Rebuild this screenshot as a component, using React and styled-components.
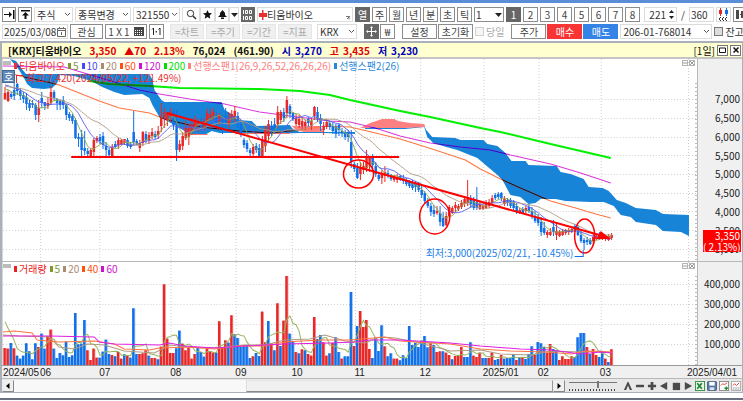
import React from "react";
import styled, { createGlobalStyle, css } from "styled-components";

const Global = createGlobalStyle`
  *, *::before, *::after { box-sizing: border-box; }
  body {
    margin: 0;
    background: #fff;
    color: #333;
    font: 10px/13px "Noto Sans CJK KR", "Liberation Sans", sans-serif;
  }
  button, input, select { font: inherit; color: inherit; margin: 0; }
`;

/* ---------- data ---------- */

const STEP = 3.055;
const X0 = 6;
const xAt = (i) => X0 + i * STEP;

// Each candle: direction, high, body top, body bottom, low (plot units)
const candles = `
r 87 93 99 100|r 90 92 101 102|b 92 94 97 99|b 83 90 96 100|b 83 84 91 95|b 88 91 96 100|b 92 95 99 103|b 93 97 104 110|b 100 103 108 111|b 100 103 105 108|
b 103 105 115 120|r 100 108 115 122|b 92 98 103 108|b 102 102 106 110|r 97 103 106 109|r 86 92 103 105|b 90 92 98 101|b 98 99 103 110|b 100 101 105 110|b 96 100 105 109|
b 104 105 115 120|b 112 114 118 121|b 114 116 121 124|b 118 120 138 139|b 133 137 139 147|b 130 137 150 156|b 131 148 151 155|b 148 151 154 158|r 148 150 156 158|r 138 140 152 156|
r 136 138 141 143|b 134 137 141 144|b 132 136 145 149|b 142 146 150 156|b 148 150 155 157|r 144 147 156 157|b 141 144 147 148|r 138 140 145 149|r 139 140 144 145|r 139 139 143 145|
b 138 140 146 148|b 142 144 147 149|b 111 132 142 145|b 139 141 143 145|r 140 143 148 152|r 131 132 143 146|b 131 134 140 143|r 132 135 140 144|r 128 132 136 139|b 131 134 137 139|
r 126 131 135 139|r 103 118 126 132|r 108 112 118 128|r 112 114 120 126|r 108 112 116 122|b 110 112 125 130|b 110 126 150 161|r 140 144 150 152|r 132 136 146 150|r 121 128 138 140|
r 124 128 137 145|r 118 124 131 135|r 116 120 126 129|r 118 122 126 132|b 118 121 127 128|r 118 121 127 131|r 109 113 121 125|r 109 114 118 121|r 108 112 116 120|b 112 118 122 128|
r 113 115 121 125|b 115 120 124 134|b 108 116 122 128|r 112 118 124 128|r 110 114 119 122|r 106 111 117 122|b 112 116 124 128|b 120 124 133 137|b 138 140 145 148|b 140 143 149 152|
b 148 150 153 156|r 144 147 154 157|b 143 146 150 153|b 144 148 156 157|r 136 140 156 157|r 126 130 146 152|r 120 124 136 141|b 121 126 132 136|b 118 124 130 134|r 106 112 124 128|
r 110 112 120 124|b 108 112 118 122|r 96 100 113 118|b 104 106 114 118|b 112 113 119 121|r 114 118 124 126|r 115 119 125 128|r 118 121 126 130|r 120 122 126 130|b 117 119 123 127|
r 118 121 126 130|r 106 107 116 120|b 107 112 118 122|b 114 118 124 131|r 122 126 130 135|r 119 122 127 129|b 121 123 127 130|b 122 126 131 134|b 124 127 134 138|b 123 125 130 136|
b 128 131 133 137|b 130 132 137 140|b 130 133 137 142|b 130 142 162 168|b 162 164 169 172|b 163 168 178 179|r 162 168 174 180|r 162 166 170 174|r 150 156 168 172|r 156 158 164 172|
b 154 157 165 172|b 162 166 174 177|b 173 175 179 181|r 170 174 178 184|r 166 172 176 182|b 170 173 176 178|b 174 175 179 181|r 175 176 180 182|r 174 177 180 183|b 175 176 180 181|
b 175 178 181 184|b 178 180 184 186|b 180 182 186 188|b 180 183 188 190|b 181 183 187 192|b 182 184 190 192|b 186 190 195 198|b 191 193 201 203|b 198 202 206 208|b 203 206 212 216|
b 205 210 214 217|r 206 211 213 215|b 206 213 222 226|b 212 218 226 227|r 212 216 225 226|r 205 207 216 218|r 206 208 213 214|r 202 205 208 212|r 204 206 209 211|r 200 203 207 209|
r 196 199 204 207|r 180 197 203 206|b 195 198 204 208|b 197 200 208 210|b 187 202 208 210|r 202 204 209 210|r 204 206 209 210|r 200 203 208 209|r 199 202 206 208|r 195 198 203 205|
b 193 195 198 200|b 192 194 197 199|b 192 193 198 201|r 196 199 204 206|b 198 200 203 206|b 198 200 206 208|b 200 202 208 210|b 203 206 212 214|r 208 210 212 214|b 207 209 213 214|
r 206 208 211 214|b 204 207 211 213|b 207 211 215 219|b 211 216 221 223|b 214 217 223 226|b 217 222 232 236|b 222 228 233 235|r 230 232 235 238|r 228 232 235 236|b 220 227 232 236|
r 223 231 235 240|r 230 232 236 237|r 229 231 235 236|r 229 230 233 235|r 228 230 232 235|r 227 229 232 233|b 224 226 230 232|b 225 227 235 236|b 229 235 241 243|b 238 240 243 250|
b 237 240 242 245|b 238 240 244 245|r 233 237 241 245|r 234 236 239 240|b 232 234 238 240|r 233 235 237 240|r 235 236 239 241|r 234 236 240 241|r 233 235 238 240`
  .split("|")
  .map((row) => {
    const [dir, ...v] = row.trim().split(" ");
    const [high, top, bottom, low] = v.map(Number);
    return { up: dir === "r", high, top, bottom, low, close: dir === "r" ? top : bottom };
  });

// Volume per session, in thirds of a plot unit above the base line
const volumes = `
51r 49r 66b 50r 28b 19b 28b 65b 41b 17b 65b 54r 94b 49b 87r 106r 49b 21b 36b 29b 70b 24b 29b 156b 62b 64b 135b
44r 15r 49r 22r 22b 40b 76b 33b 30r 26b 39r 19r 32b 28r 22b 170b 33b 33r 35r 44r 28b 21r 21r 17b 55r 242r 79r
36r 36r 50b 103b 64r 44r 52r 19r 33r 53b 39b 25b 50r 39r 37r 37b 131r 52r 74r 67b 149r 92b 81b 54b 60b
60b 21b 26r 36b 27b 160r 68r 132b 65r 44b 185r 57b 133r 267r 94b 71b 39r 35b 47r 44b 33r 28r 144r 78b 90b 68r 28r 35b
66r 83b 39b 19r 26b 26b 219b 57r 117b 162r 114r 135r 48r 21b 82b 42b 119b 56r 26b 35b 19r 19r 14b 29b 21b 117b 60b 66b 54b
70b 87b 53b 65r 60b 39r 41r 41b 37r 30r 17b 27r 30r 54r 24b 24b 68b 28r 24r 37r 21b 21b 21r 37r
15b 18b 30r 19b 21b 21b 33b 15r 24b 24r 18b 33b 56b 30r 69b 65b 54b 36r 63r 48b 44b 15r 26r 18r 18r 26r 24b 83b 96b 96b
54r 33b 48r 30r 24b 41b 19r 9b 47r`
  .trim()
  .split(/\s+/)
  .map((t) => ({ up: t.endsWith("r"), h: parseInt(t, 10) / 3 }));

const average = (values, period, seed) =>
  values.map((_, i) => {
    let sum = 0;
    for (let k = 0; k < period; k += 1) sum += i - k >= 0 ? values[i - k] : seed;
    return sum / period;
  });

const toPoints = (ys) => ys.map((y, i) => `${xAt(i).toFixed(1)},${y.toFixed(1)}`).join(" ");

const closes = candles.map((c) => c.close);
const priceAverages = [
  ["#8aa84a", toPoints(average(closes, 5, 88))],
  ["#5a5af0", toPoints(average(closes, 10, 84))],
  ["#b09a80", toPoints(average(closes, 20, 86))],
];
const volumeHeights = volumes.map((v) => v.h);
const volumeFive = toPoints(average(volumeHeights, 5, 50).map((h) => 365 - h));

const MA60 = "14,74 25,77 48,82 60,85 80,93 100,101 120,108 150,113 165,119 190,125 210,128 240,131 270,133 300,130 325,126 350,127 363,130 400,139 432,149 465,160 480,169 500,179 520,188 543,198 550,201 575,208 595,214 610,218";
const MA120 = "4,66 65,67 85,73 115,82 140,90 160,94 190,99 225,104 260,112 290,116 330,121 350,122 375,128 400,136 430,143 460,147 490,150 510,155 550,164 580,173 610,183";
const MA200 = "90,81 110,84 150,86 180,88 260,89 300,91 330,95 350,100 400,111 430,117 480,128 500,132 550,144 610,158";

const CLOUD = [
  "M11,59 L17,61 22,68 27,74 150,74 153,80 155,90 162,100 165,102 222,102 225,110 232,114 238,120 252,121 257,126 290,125 293,129 300,132 350,132 355,132 355,134 325,133 300,133 270,134 240,133 232,133 220,133 212,131 205,135 190,134 175,125 160,117 153,105 150,98 143,94 125,95 115,92 103,87 92,81 75,76 61,75 58,83 53,88 45,89 33,88 28,84 25,78 20,70 Z",
  "M365,127 L405,128 424,126 426,130 432,137 455,138 460,140 483,140 487,144 497,146 505,153 511,161 525,161 528,165 556,166 560,172 570,174 583,179 588,187 602,188 608,191 616,200 625,203 635,208 655,210 662,214 688,215 688,236 680,232 662,231 655,225 635,222 630,217 620,215 613,206 603,202 590,202 565,201 555,199 540,199 535,203 528,204 520,197 510,195 502,180 497,175 477,158 457,150 446,147 433,143 427,137 424,127 405,129 365,129 Z",
].join(" ");

const VERTICALS = [41, 100, 171, 236, 292, 355, 420, 483, 538, 600, 687];
const PRICE_LINES = [99, 118, 137, 155, 174, 193, 211, 230, 249];
const VOLUME_LINES = [284, 304, 324, 344];

/* ---------- frame ---------- */

const Window = styled.main`
  border-top: 3px solid #5b8ed6;
  border-bottom: 2px solid #6a7080;
  overflow: hidden;
`;

const Toolbar = styled.header`
  display: flex;
  flex-direction: column;
  gap: 2px;
  padding: 4px 0 2px 2px;
`;

const ToolRow = styled.div`
  display: flex;
  gap: 2px;
  height: 15px;
  white-space: nowrap;
`;

const ToolGroup = styled.div`
  display: flex;
  flex: none;
  align-items: center;
  gap: ${(p) => p.$gap ?? 2}px;
  margin-left: ${(p) => p.$before ?? 0}px;
`;

const tones = {
  plain: css`background: #fff; border-color: #8c8c8c; color: #444;`,
  soft: css`background: #fff; border-color: #dcdcdc; color: #333;`,
  dark: css`background: #666; border-color: #666; color: #fff;`,
  off: css`background: #f0f0f0; border-color: #e6e6e6; color: #aaa;`,
  buy: css`background: #f83434; border-color: #f83434; color: #fff;`,
  sell: css`background: #3484e8; border-color: #3484e8; color: #fff;`,
};

const ToolButton = styled.button`
  display: flex;
  flex: none;
  align-items: center;
  justify-content: center;
  width: ${(p) => p.$w ?? 15}px;
  height: 15px;
  padding: 0;
  border: 1px solid;
  line-height: 13px;
  ${(p) => tones[p.$tone ?? "plain"]}
`;

const Field = styled.span`
  display: flex;
  flex: none;
  align-items: center;
  width: ${(p) => p.$w}px;
  height: 15px;
  padding: 0 1px;
  border: 1px solid ${(p) => (p.$strong ? "#8c8c8c" : "#dcdcdc")};
  background: #fff;
  overflow: hidden;
`;

const TextInput = styled.input`
  flex: 1;
  min-width: 0;
  width: 100%;
  height: 13px;
  padding: 0;
  border: 0;
  outline: 0;
  background: none;
  text-align: ${(p) => p.$align ?? "left"};
`;

const Picker = styled.select`
  flex: 1;
  min-width: 0;
  height: 13px;
  padding: 0 0 0 1px;
  border: 0;
  outline: 0;
  appearance: none;
  background: none;
  line-height: 13px;
`;

const Check = styled.label`
  display: flex;
  flex: none;
  align-items: center;
  gap: 2px;
  color: ${(p) => (p.$off ? "#aaa" : "#333")};
`;

const Tick = styled.input`
  appearance: none;
  width: 9px;
  height: 9px;
  border: 1px solid ${(p) => (p.disabled ? "#d0d0d0" : "#777")};
  background: ${(p) => (p.disabled ? "#f6f6f6" : "#ddd")};
`;

const FixedSvg = styled.svg`flex: none;`;

const Chevron = () => (
  <FixedSvg width="7" height="5" viewBox="0 0 7 5" fill="none" stroke="#555">
    <path d="M1 1l2.500 2.500L6 1" />
  </FixedSvg>
);

const Down = () => (
  <FixedSvg width="7" height="4" viewBox="0 0 7 4" fill="#222"><path d="M0 0h7L3.500 4z" /></FixedSvg>
);

function Dropdown({ label, value, width }) {
  return (
    <Field $w={width}>
      <Picker aria-label={label} defaultValue={value}><option>{value}</option></Picker>
      <Chevron />
    </Field>
  );
}

/* ---------- quote strip ---------- */

const Panel = styled.section`
  border: solid #a9b0ba;
  border-width: 2px 1px 1px 2px;
  margin-bottom: 5px;
`;

const Quote = styled.div`
  display: flex;
  align-items: center;
  gap: 8px;
  height: 16px;
  padding: 0 1px 0 6px;
  border-bottom: 2px solid #c4c4c4;
  background: #ffffd0;
  color: #111;
  font-weight: 700;
  white-space: nowrap;
`;

const Figure = styled.span`color: ${(p) => p.$color ?? "#111"};`;
const Pair = styled.span`
  display: flex;
  gap: 4px;
  color: ${(p) => p.$color};
`;
const Period = styled.span`
  margin-left: auto;
  font-weight: 400;
`;
const FrameButtons = styled.span`
  display: flex;
  gap: 2px;
  margin-left: -6px;
`;
const FrameButton = styled.button`
  display: flex;
  align-items: center;
  justify-content: center;
  width: 11px;
  height: 11px;
  padding: 0;
  border: 1px solid #777;
  background: #fff;
`;

/* ---------- charts ---------- */

const Pane = styled.div`
  display: grid;
  grid-template-columns: minmax(0, 1fr) 45px;
  border-bottom: 1px solid ${(p) => p.$line ?? "#b8b8b8"};
`;

const Plot = styled.div`
  position: relative;
  border-left: 1px solid #d8d8d8;
`;

const Canvas = styled.svg`
  display: block;
  width: 100%;
  height: ${(p) => p.$h}px;
`;

const Legend = styled.div`
  position: absolute;
  top: 0;
  left: ${(p) => p.$left}px;
  display: flex;
  gap: 3px;
  white-space: nowrap;
`;

const Key = styled.span`
  display: flex;
  align-items: center;
  gap: 2px;
  color: ${(p) => p.$color};
  &::before {
    content: "";
    width: 3px;
    height: 6px;
    background: currentColor;
  }
`;

const Handle = styled.span`
  position: absolute;
  top: 2px;
  left: 0;
  width: 8px;
  height: 4px;
  background: #bcbcbc;
`;

const Callout = styled.span`
  position: absolute;
  top: ${(p) => p.$top}px;
  ${(p) => (p.$right ? `right: ${p.$right}` : `left: ${p.$left}px`)};
  color: ${(p) => p.$color};
  white-space: nowrap;
`;

const Badge = styled.button`
  position: absolute;
  top: 11px;
  left: -1px;
  width: 13px;
  height: 13px;
  padding: 0;
  border: 1px solid #46688f;
  background: #6088b8;
  color: #fff;
  line-height: 11px;
`;

const PaneTools = styled.div`
  position: absolute;
  top: 1px;
  right: 2px;
  display: flex;
  gap: 1px;
`;

const PaneTool = styled.button`
  display: flex;
  align-items: center;
  justify-content: center;
  width: 6px;
  height: 6px;
  padding: 0;
  border: 1px solid #b4b4b4;
  background: #fff;
`;

const Axis = styled.div`
  position: relative;
  padding: ${(p) => p.$top}px 2px 0 0;
  border-left: 1px solid #b8b8b8;
  background: #f0f0f0;
  text-align: right;
  color: #222;
`;

const AxisValue = styled.div`
  line-height: ${(p) => p.$h}px;
  margin-bottom: ${(p) => p.$after ?? 0}px;
`;

const LastPrice = styled.div`
  position: absolute;
  top: 171px;
  right: 1px;
  width: 38px;
  padding-right: 1px;
  background: #f00;
  color: #fff;
  line-height: 11px;
  white-space: nowrap;
`;

const Dates = styled.div`
  display: grid;
  grid-template-columns: 37fr 59fr 71fr 65fr 56fr 63fr 65fr 63fr 55fr 62fr 87fr 55px;
  height: 13px;
  padding-left: 1px;
  border-bottom: 1px solid #b8b8b8;
  background: #f0f0f0;
  color: #222;
  font-family: "Liberation Sans Narrow", "Liberation Sans", sans-serif;
  white-space: nowrap;
`;

const DateMark = styled.span`
  min-width: 0;
  line-height: 13px;
`;

/* ---------- bottom strip ---------- */

const Footer = styled.div`
  display: flex;
  align-items: center;
  height: 13px;
  background: #e8e8e8;
`;

const ScrollButton = styled.button`
  display: flex;
  align-items: center;
  justify-content: center;
  flex: none;
  width: 12px;
  height: 12px;
  padding: 0;
  border: 1px solid;
  border-color: #eee #888 #888 #eee;
  background: #f0f0f0;
`;

const Track = styled.div`
  display: flex;
  justify-content: flex-end;
  flex: 1;
  height: 12px;
  background: #f8f8f8;
`;

const Thumb = styled.div`
  width: 57%;
  border: 1px solid;
  border-color: #e4e4e4 #999 #888 #ddd;
  background: #f0f0f0;
`;

const Zoom = styled.input`
  appearance: none;
  flex: none;
  width: 48px;
  height: 12px;
  margin: 0 5px 0 4px;
  background:
    repeating-linear-gradient(90deg, #444 0 1px, transparent 1px 3px) 0 9px / 100% 2px no-repeat,
    linear-gradient(#777, #777) 0 2px / 100% 1px no-repeat;
  &::-webkit-slider-thumb {
    appearance: none;
    width: 2px;
    height: 7px;
    margin-top: -3px;
    background: #777;
  }
`;

const IconButton = styled.button`
  display: flex;
  align-items: center;
  justify-content: center;
  flex: none;
  width: 12px;
  height: 12px;
  padding: 0;
  border: 0;
  background: none;
`;

/* ---------- pieces ---------- */

function Grid({ rows, top, bottom }) {
  return (
    <g stroke="#d0d0d0" strokeDasharray="1 2">
      {VERTICALS.map((x) => <path key={x} d={`M${x}.5 ${top}V${bottom}`} />)}
      {rows.map((y) => <path key={y} d={`M4 ${y}.5H696`} />)}
    </g>
  );
}

function Ticks({ from, to }) {
  const marks = [];
  for (let y = from; y < to; y += 4) marks.push(<path key={y} d={`M694 ${y}.5h2`} />);
  return <g stroke="#bbb">{marks}</g>;
}

function LongAverages({ dark }) {
  return (
    <g fill="none">
      <polyline points={MA60} stroke={dark ? "#0a1030" : "#ff7440"} />
      <polyline points={MA120} stroke={dark ? "#1818d0" : "#d838d8"} />
      <polyline points={MA200} stroke={dark ? "#087820" : "#00f000"} strokeWidth="2" />
    </g>
  );
}

function PriceChart() {
  return (
    <Canvas $h={202} viewBox="4 59 692 202" preserveAspectRatio="none" role="img" aria-label="티움바이오 일봉 차트">
      <clipPath id="cloud"><path d={CLOUD} /></clipPath>
      <Grid rows={PRICE_LINES} top={59} bottom={261} />
      <Ticks from={83} to={260} />
      <path d={CLOUD} fill="#1884d8" />
      <path d="M292 126H320L324 132H304L296 130ZM360 128L364 126 370 123 376 121 382 119 394 119 398 121 410 123 424 124 425 127 405 128 365 128Z" fill="#ff8080" />
      <path d="M188 134.500H208M236 133.500H290" stroke="#ff7070" />
      <LongAverages />
      <g clipPath="url(#cloud)"><LongAverages dark /></g>
      {candles.map((c, i) => (
        <g key={i} fill={c.up ? "#e82828" : "#1070e8"}>
          <rect x={xAt(i) - 0.500} y={c.high} width="1" height={c.low - c.high} />
          <rect x={xAt(i) - 1.250} y={c.top} width="2.500" height={c.bottom - c.top} />
        </g>
      ))}
      {priceAverages.map(([color, points]) => (
        <polyline key={color} points={points} fill="none" stroke={color} strokeWidth="0.900" />
      ))}
      <g fill="none" stroke="#f00" strokeWidth="2">
        <path d="M72 157H399" />
        <path d="M167 113L602 236" />
        <ellipse cx="358.500" cy="174" rx="15" ry="14" strokeWidth="1.500" />
        <ellipse cx="434.500" cy="216.500" rx="15" ry="17.500" strokeWidth="1.500" />
        <ellipse cx="584" cy="236" rx="10" ry="17" strokeWidth="1.500" />
      </g>
      <path d="M600 231L610 239 596 239Z" fill="#f00" />
      <path d="M574 256.500H582.500V250" fill="none" stroke="#1070e8" />
      <path d="M17.500 83V75.500H24" fill="none" stroke="#e82828" />
    </Canvas>
  );
}

function VolumeChart() {
  return (
    <Canvas $h={103} viewBox="4 262 692 103" preserveAspectRatio="none" role="img" aria-label="거래량 차트">
      <Grid rows={VOLUME_LINES} top={262} bottom={365} />
      <Ticks from={276} to={365} />
      {volumes.map((v, i) => (
        <g key={i} fill={v.up ? "#e82828" : "#1070e8"}>
          <rect x={xAt(i) - 1.500} y={365 - v.h} width="3" height={v.h} opacity="0.500" />
          <rect x={xAt(i) - 1.500} y={365 - v.h} width="2.200" height={v.h} />
        </g>
      ))}
      <g fill="none">
        <polyline points={volumeFive} stroke="#98b460" />
        <polyline points="4,335 20,336 50,337 60,347 75,349 88,344 105,345 125,351 140,352 155,353 170,345 200,348 225,347 245,345 265,345 285,340 310,339 325,335 345,341 365,343 380,337 395,338 420,343 450,351 480,350 500,354 530,355 550,351 580,352 600,351 611,353" stroke="#b09a80" />
        <polyline points="4,332 15,331 25,332 33,333 38,340 60,342 95,341 115,344 125,349 150,350 160,348 190,347 215,349 240,346 265,346 285,342 320,340 350,340 385,337 400,341 450,344 480,349 510,351 545,352 570,354 585,351 611,352" stroke="#ff7440" />
        <polyline points="4,336 50,336 95,337 100,342 115,344 160,345 170,343 185,346 215,348 245,346 285,344 330,343 355,342 370,340 400,340 450,343 480,346 520,349 550,350 580,354 600,352 611,353" stroke="#e020e0" />
      </g>
    </Canvas>
  );
}

const PaneControls = () => (
  <PaneTools>
    <PaneTool aria-label="최소화"><svg width="4" height="4" viewBox="0 0 4 4" stroke="#999"><path d="M0 2h4" /></svg></PaneTool>
    <PaneTool aria-label="닫기"><svg width="4" height="4" viewBox="0 0 4 4" stroke="#999"><path d="M0 0l4 4M4 0L0 4" /></svg></PaneTool>
  </PaneTools>
);

const Glyph = ({ children, size = 11 }) => (
  <svg width={size} height={size} viewBox="0 0 11 11" fill="#4a4a4a">{children}</svg>
);

const bottomIcons = [
  ["맨 위", <path d="M1 10L5 1h1l4 9H7.500L5.500 5l-2 5z" />],
  ["축소", <rect x="1" y="4" width="9" height="3" rx="1" />],
  ["확대", <path d="M4 1h3v3h3v3H7v3H4V7H1V4h3z" />],
  ["이전", <path d="M9 1v9L1 5.500z" />],
  ["정지", <rect x="2" y="2" width="8" height="8" />],
  ["다음", <path d="M2 1v9l8-4.500z" />],
  ["엑셀", <><rect x=".5" y=".5" width="10" height="10" fill="#e4f4e0" stroke="#2f8a3c" /><path d="M2.500 2.500l5 6M7.500 2.500l-5 6" stroke="#16803a" strokeWidth="1.800" /></>],
  ["저장", <><rect x=".5" y=".5" width="10" height="10" rx="1" fill="#5a7aa8" stroke="#44597c" /><rect x="2.500" y="1" width="6" height="4" fill="#fff" /><rect x="3" y="7" width="5" height="3" fill="#dde4ee" /></>],
  ["차트 추가", <><rect x=".5" y=".5" width="10" height="10" fill="#fff" stroke="#888" /><path d="M2 5l2-2 2 1 3-2" fill="none" stroke="#d33" /><path d="M6 8h4M8 6v4" stroke="#2a8a3a" strokeWidth="1.500" /></>],
  ["차트 설정", <><rect x=".5" y=".5" width="10" height="10" fill="#fff" stroke="#aaa" /><path d="M2 5l2-2 2 2 3-3" fill="none" stroke="#d33" /><path d="M2 7.500h7M2 9h7" stroke="#777" strokeDasharray="1 1" /></>],
];

export default function App() {
  return (
    <>
      <Global />
      <Window>
        <Toolbar>
          <ToolRow>
            <ToolButton $w={14} aria-label="오른쪽 이동"><Glyph><path d="M0 5h5V2.500L8 5.500 5 8.500V6H0zM9 1h1.500v9H9z" fill="#111" /></Glyph></ToolButton>
            <ToolButton $w={14} aria-label="위로"><Glyph><path d="M1 1h9v1.500H1zM5.500 3L9 6.500H6.500V10h-2V6.500H2z" fill="#111" /></Glyph></ToolButton>
            <Dropdown label="종류" value="주식" width={39} />
            <Dropdown label="종목" value="종목변경" width={56} />
            <Dropdown label="종목코드" value="321550" width={47} />
            <ToolGroup $gap={0}>
              <ToolButton $tone="soft" $w={18} aria-label="검색"><Glyph><circle cx="4.500" cy="4.500" r="3.200" fill="none" stroke="#333" /><path d="M7 7l3 3" stroke="#333" strokeWidth="1.500" /></Glyph></ToolButton>
              <ToolButton $tone="soft" $w={15} aria-label="즐겨찾기"><Glyph><path d="M5.500 1l1.300 3 3.200.3-2.400 2.200.7 3.300-2.800-1.700-2.800 1.700.7-3.300L1 4.300 4.200 4z" fill="#111" /></Glyph></ToolButton>
              <ToolButton $tone="soft" $w={14} aria-label="알림"><Glyph><path d="M5.500 1L8 4v2l2 2H1l2-2V4zM4 8.500h3V10H4z" fill="#111" /></Glyph></ToolButton>
              <ToolButton $tone="soft" $w={10} aria-label="더보기"><Down /></ToolButton>
            </ToolGroup>
            <ToolButton $tone="dark" $w={14} aria-label="100/100">
              <svg width="12" height="12" viewBox="0 0 12 12" fill="none" stroke="#fff"><path d="M1.500 1v4M3.500 1.500h2v3h-2zM7.500 1.500h2v3h-2zM1.500 7v4M3.500 7.500h2v3h-2zM7.500 7.500h2v3h-2z" /></svg>
            </ToolButton>
            <Field $w={96}>
              <FixedSvg width="8" height="11" viewBox="0 0 8 11" fill="#e83030"><path d="M0 4h8v4H0zM3 1h1.500v10H3z" /></FixedSvg>
              <TextInput aria-label="종목명" defaultValue="티움바이오" />
              <svg width="5" height="10" viewBox="0 0 5 10" stroke="#777" fill="none"><path d="M0 6.500h3V9.500M1 9l3-3" /></svg>
            </Field>
            {["열", "주", "월", "년", "분", "초", "틱"].map((t, i) => (
              <ToolButton key={t} $tone={i ? "plain" : "dark"}>{t}</ToolButton>
            ))}
            <Field $w={30} $strong>
              <TextInput aria-label="간격" defaultValue="1" />
              <Down />
            </Field>
            <ToolGroup>
              {[1, 2, 3, 4, 5, 6, 7, 8].map((n) => (
                <ToolButton key={n} $tone={n === 1 ? "dark" : "plain"}>{n}</ToolButton>
              ))}
            </ToolGroup>
            <ToolGroup $before={2} $gap={4}>
              <Field $w={33}>
                <TextInput aria-label="표시 개수" defaultValue="221" $align="right" />
                <FixedSvg width="9" height="11" viewBox="0 0 9 11" fill="#222"><path d="M3 4h5L5.500 1zM3 7h5l-2.500 3z" /></FixedSvg>
              </Field>
              <span>/</span>
              <Field $w={25}><TextInput aria-label="전체 개수" defaultValue="360" /></Field>
            </ToolGroup>
            <ToolButton $w={15} $tone="soft" aria-label="캔들 이동">
              <svg width="13" height="13" viewBox="0 0 13 13"><path d="M2 2h3v4H2zM3 0h1v8H3z" fill="#e82828" /><path d="M8 2h3v4H8zM9 0h1v8H9z" fill="#1070e8" /><path d="M4 9l-2 2 2 2M7 9l-2 2 2 2M10 9l-2 2 2 2" fill="none" stroke="#333" /></svg>
            </ToolButton>
            <ToolButton $w={15} aria-label="차트 분할"><Glyph><path d="M1 1h3v9H1zM5 5h5v1H5zM6 2h4v7H6z" /></Glyph></ToolButton>
          </ToolRow>

          <ToolRow>
            <Field $w={66}>
              <TextInput aria-label="날짜" defaultValue="2025/03/08" />
              <FixedSvg width="9" height="10" viewBox="0 0 9 10" fill="none" stroke="#666"><path d="M.5 1.500h8v8h-8zM0 3.500h9M4.500 5v3M2.500 0v2M6.500 0v2" /></FixedSvg>
            </Field>
            <ToolButton $w={33}>관심</ToolButton>
            <ToolButton $w={42} aria-label="1 X 1 배열">
              <ToolGroup $gap={4}>
                <span>1 X 1</span>
                <svg width="10" height="9" viewBox="0 0 10 9" fill="#444"><path d="M0 0h10v9H0z" /><path d="M1 3.500h8M1 5.500h8M1 7.500h8" stroke="#fff" strokeDasharray="1 1" /></svg>
              </ToolGroup>
            </ToolButton>
            <ToolButton aria-label="1:1"><Glyph><path d="M1 3.500L2.500 2v7M7.500 3.500L9 2v7" fill="none" stroke="#222" /><path d="M4.500 5h1.500v1.500H4.500z" /></Glyph></ToolButton>
            <ToolGroup $before={4}>
              {["=차트", "=주기", "=기간", "=지표"].map((t) => (
                <ToolButton key={t} $tone="off" $w={34}>{t}</ToolButton>
              ))}
            </ToolGroup>
            <ToolGroup $before={3}><Dropdown label="거래소" value="KRX" width={40} /></ToolGroup>
            <ToolGroup $before={5} $gap={1}>
              <ToolButton $tone="dark" aria-label="십자선"><Glyph><path d="M5 1h1v4h4v1H6v4H5V6H1V5h4zM5.500 0l1.500 2H4zM5.500 11L4 9h3zM0 5.500L2 4v3zM11 5.500L9 7V4z" fill="#fff" /></Glyph></ToolButton>
              <ToolButton>₩</ToolButton>
            </ToolGroup>
            <ToolGroup $before={5} $gap={1}>
              <ToolButton $w={35}>설정</ToolButton>
              <ToolButton $w={35}>초기화</ToolButton>
            </ToolGroup>
            <Check $off><Tick type="checkbox" disabled />당일</Check>
            <ToolGroup $before={5} $gap={1}>
              <ToolButton $w={35}>주가</ToolButton>
              <ToolButton $w={35} $tone="buy">매수</ToolButton>
              <ToolButton $w={35} $tone="sell">매도</ToolButton>
            </ToolGroup>
            <Dropdown label="계좌번호" value="206-01-768014" width={92} />
            <Check><Tick type="checkbox" />잔고</Check>
          </ToolRow>
        </Toolbar>

        <Panel>
          <Quote>
            <Figure>[KRX]티움바이오</Figure>
            <Figure $color="#e00000">3,350</Figure>
            <Figure $color="#e00000">▲70</Figure>
            <Figure $color="#e00000">2.13%</Figure>
            <Figure>76,024</Figure>
            <Figure>(461.90)</Figure>
            <Pair $color="#0000b8"><span>시</span><span>3,270</span></Pair>
            <Pair $color="#e00000"><span>고</span><span>3,435</span></Pair>
            <Pair $color="#0000b8"><span>저</span><span>3,230</span></Pair>
            <Period>[1일]</Period>
            <FrameButtons>
              <FrameButton aria-label="최대화"><svg width="7" height="6" viewBox="0 0 7 6" fill="none" stroke="#111"><path d="M.5 1h6v4.500h-6z" /></svg></FrameButton>
              <FrameButton aria-label="닫기"><svg width="6" height="6" viewBox="0 0 6 6" stroke="#111" strokeWidth="1.500"><path d="M.5.5l5 5M5.500.5l-5 5" /></svg></FrameButton>
            </FrameButtons>
          </Quote>

          <Pane>
            <Plot>
              <PriceChart />
              <Handle />
              <Legend $left={11}>
                <Key $color="#f03030">티움바이오</Key>
                <Key $color="#7a9a38">5</Key>
                <Key $color="#4848f0">10</Key>
                <Key $color="#a88c70">20</Key>
                <Key $color="#ff5010">60</Key>
                <Key $color="#d010d0">120</Key>
                <Key $color="#00e000">200</Key>
                <Key $color="#ff8080">선행스팬1(26,9,26,52,26,26,26)</Key>
                <Key $color="#2888d8">선행스팬2(26)</Key>
              </Legend>
              <Callout $top={12} $left={23} $color="#e83030">최고:7,420(2024/05/22, +121.49%)</Callout>
              <Callout $top={187} $right="17.8%" $color="#2080e8">최저:3,000(2025/02/21, -10.45%)</Callout>
              <Badge>호</Badge>
              <PaneControls />
            </Plot>
            <Axis $top={31}>
              {["7,000", "6,500", "6,000", "5,500", "5,000", "4,500", "4,000", "3,500", "3,000"].map((v, i) => (
                <AxisValue key={v} $h={18} $after={i % 4 === 3 ? 0 : 1}>{v}</AxisValue>
              ))}
              <LastPrice>3,350<br />( 2.13%)</LastPrice>
            </Axis>
          </Pane>

          <Pane $line="#999">
            <Plot>
              <VolumeChart />
              <Handle />
              <Legend $left={11}>
                <Key $color="#e82020">거래량</Key>
                <Key $color="#7a9a38">5</Key>
                <Key $color="#a88c70">20</Key>
                <Key $color="#ff5010">40</Key>
                <Key $color="#d010d0">60</Key>
              </Legend>
              <PaneControls />
            </Plot>
            <Axis $top={12}>
              {["400,000", "300,000", "200,000", "100,000"].map((v) => <AxisValue key={v} $h={20}>{v}</AxisValue>)}
            </Axis>
          </Pane>

          <Dates>
            {["2024/05", "06", "07", "08", "09", "10", "11", "12", "2025/01", "02", "03", "2025/04/01"].map((d) => (
              <DateMark key={d}>{d}</DateMark>
            ))}
          </Dates>

          <Footer>
            <ScrollButton aria-label="왼쪽"><svg width="4" height="6" viewBox="0 0 4 6"><path d="M3.500 0v6L0 3z" /></svg></ScrollButton>
            <Track><Thumb /></Track>
            <ScrollButton aria-label="오른쪽"><svg width="4" height="6" viewBox="0 0 4 6"><path d="M.5 0v6L4 3z" /></svg></ScrollButton>
            <Zoom type="range" aria-label="확대 비율" defaultValue="60" />
            {bottomIcons.map(([label, shape]) => (
              <IconButton key={label} aria-label={label}><Glyph size={10}>{shape}</Glyph></IconButton>
            ))}
          </Footer>
        </Panel>
      </Window>
    </>
  );
}
